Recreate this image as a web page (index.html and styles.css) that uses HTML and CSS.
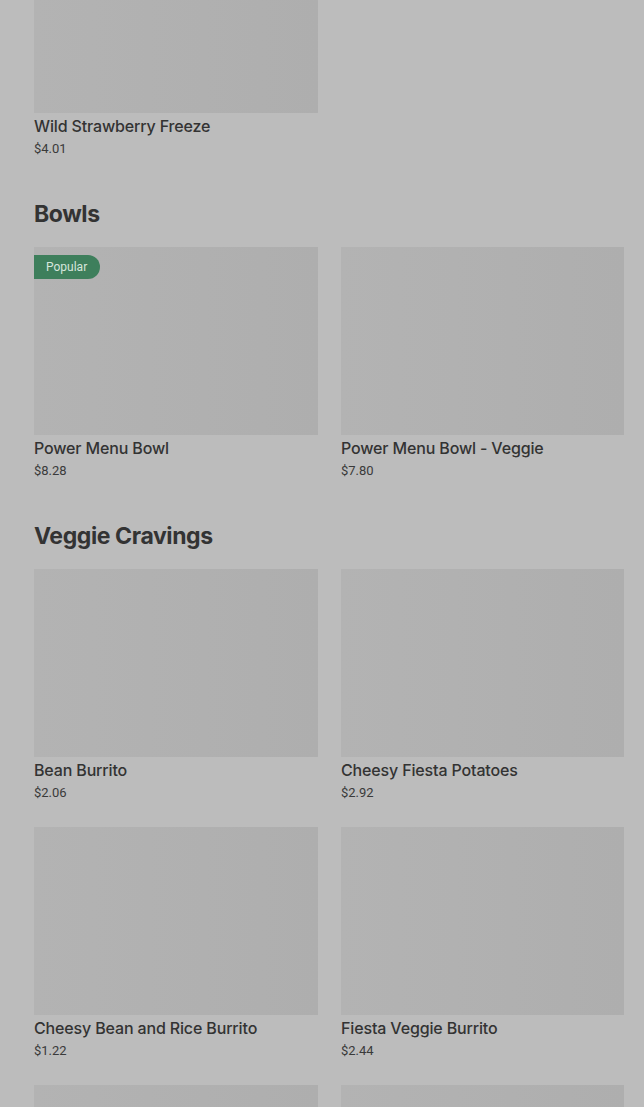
FILE: index.html
```html
<!DOCTYPE html>
<html lang="en">
<head>
<meta charset="utf-8">
<title>Menu</title>
<link rel="stylesheet" href="styles.css">
</head>
<body>
<main class="menu">
  <section class="section section-first">
    <div class="grid">
      <div class="card"><div class="thumb"></div><div class="name">Wild Strawberry Freeze</div><div class="price">$4.01</div></div>
    </div>
  </section>
  <section class="section">
    <h2 class="title">Bowls</h2>
    <div class="grid">
      <div class="card"><div class="thumb"><span class="badge">Popular</span></div><div class="name">Power Menu Bowl</div><div class="price">$8.28</div></div>
      <div class="card"><div class="thumb"></div><div class="name">Power Menu Bowl - Veggie</div><div class="price">$7.80</div></div>
    </div>
  </section>
  <section class="section">
    <h2 class="title">Veggie Cravings</h2>
    <div class="grid">
      <div class="card"><div class="thumb"></div><div class="name">Bean Burrito</div><div class="price">$2.06</div></div>
      <div class="card"><div class="thumb"></div><div class="name">Cheesy Fiesta Potatoes</div><div class="price">$2.92</div></div>
      <div class="card"><div class="thumb"></div><div class="name">Cheesy Bean and Rice Burrito</div><div class="price">$1.22</div></div>
      <div class="card"><div class="thumb"></div><div class="name">Fiesta Veggie Burrito</div><div class="price">$2.44</div></div>
      <div class="card"><div class="thumb"></div></div>
      <div class="card"><div class="thumb"></div></div>
    </div>
  </section>
</main>
</body>
</html>
```
FILE: styles.css
```css
html, body {
  margin: 0;
  padding: 0;
  background: #bcbcbc;
  overflow: hidden;
  height: 1107px;
}
body {
  font-family: Inter, Roboto, "Noto Sans", Arial, sans-serif;
  color: #333333;
}
.menu {
  padding: 0 20px 0 34px;
  margin-top: -75px;
}
.section {
  padding-top: 40px;
}
.section-first {
  padding-top: 0;
}
.title {
  margin: 0 0 19px;
  font-size: 23px;
  line-height: 28px;
  font-weight: 700;
  color: #333333;
  letter-spacing: -0.4px;
}
.grid {
  display: grid;
  grid-template-columns: 284px 283px;
  column-gap: 23px;
  row-gap: 23px;
}
.card {
  display: flex;
  flex-direction: column;
}
.thumb {
  position: relative;
  height: 188px;
  background: linear-gradient(90deg, #b3b3b3 0%, #aeaeae 100%);
}
.badge {
  position: absolute;
  left: 0;
  top: 8px;
  height: 24px;
  line-height: 24px;
  padding: 0 13px 0 12px;
  font-family: Roboto, Arial, sans-serif;
  font-size: 12px;
  color: #d6e6dc;
  background: #3e7f5c;
  border-radius: 0 12px 12px 0;
}
.name {
  margin-top: 1px;
  font-size: 16px;
  line-height: 24px;
  font-weight: 500;
  color: #333333;
  letter-spacing: -0.15px;
}
.price {
  font-family: Roboto, Arial, sans-serif;
  font-size: 13px;
  line-height: 22px;
  color: #3a3a3a;
}
```
